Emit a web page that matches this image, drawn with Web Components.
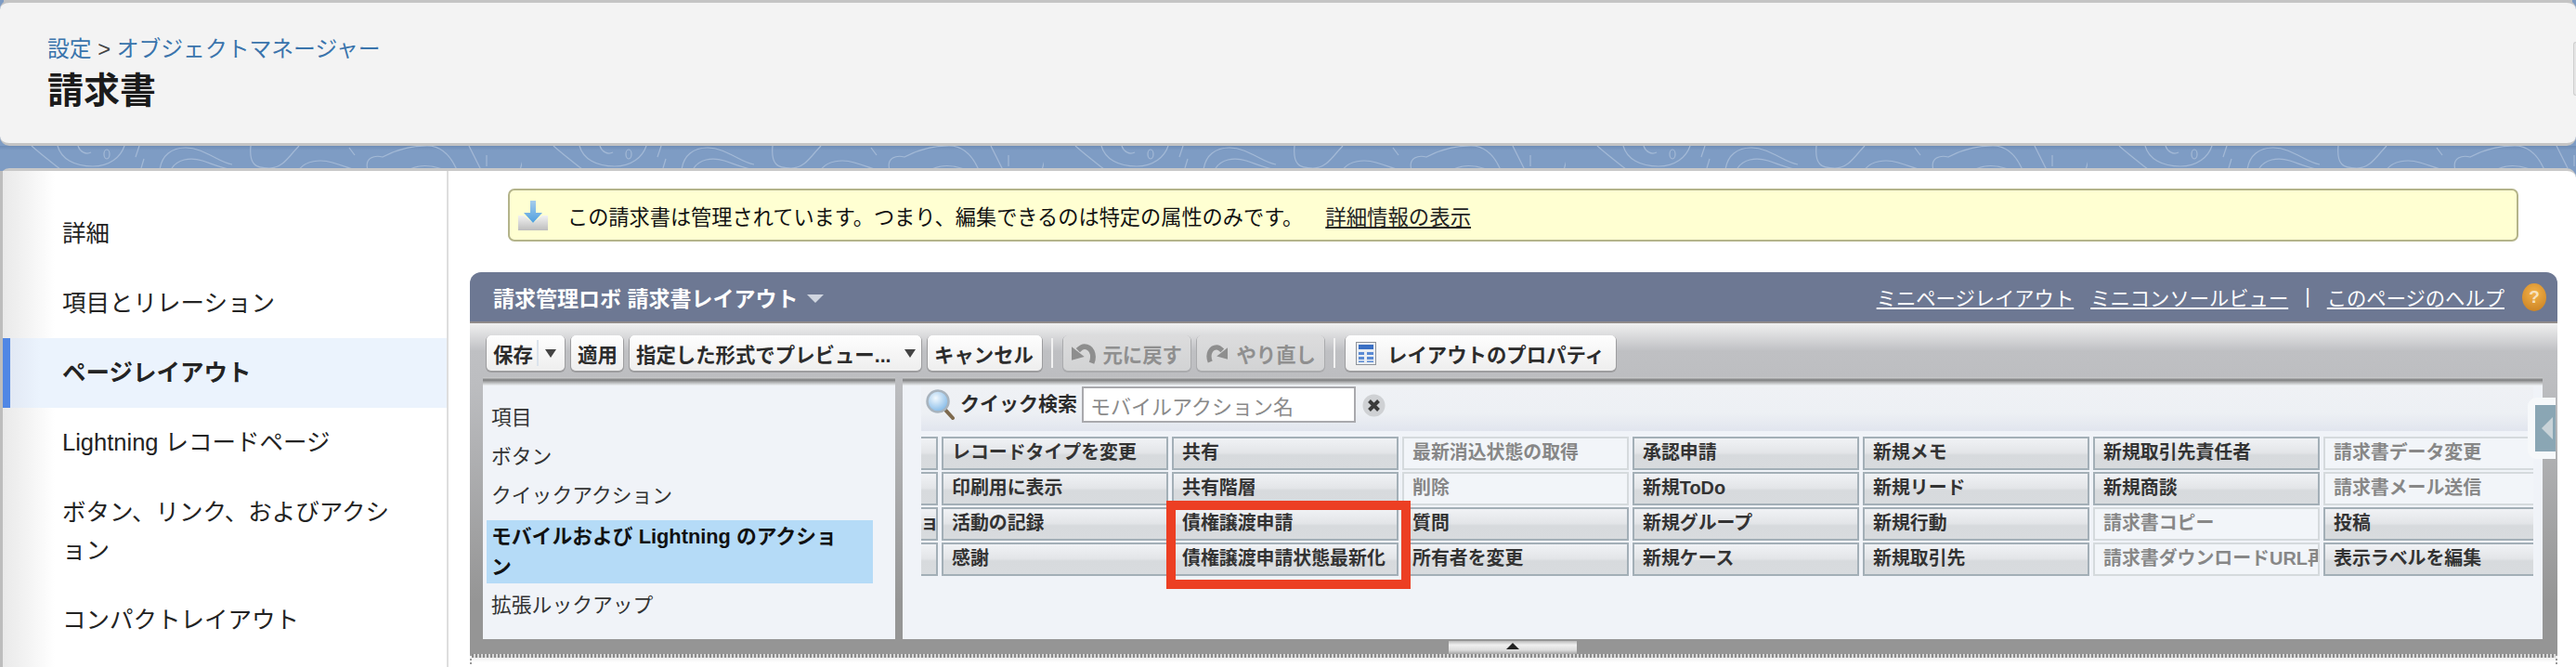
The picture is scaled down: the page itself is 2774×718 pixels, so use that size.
<!DOCTYPE html>
<html lang="ja">
<head>
<meta charset="utf-8">
<title>請求書</title>
<style>
  html, body {
    margin: 0;
    height: 718px;
    overflow: hidden;
    background: #7e9cc4;
    font-family: "Liberation Sans", "Noto Sans CJK JP", sans-serif;
  }
</style>
</head>
<body>
<setup-page>
  <setup-header slot="header">
    <a slot="crumb">設定</a>
    <a slot="crumb-2">オブジェクトマネージャー</a>
    請求書
  </setup-header>
  <setup-nav slot="nav">
    <nav-item>詳細</nav-item>
    <nav-item>項目とリレーション</nav-item>
    <nav-item active>ページレイアウト</nav-item>
    <nav-item>Lightning レコードページ</nav-item>
    <nav-item>ボタン、リンク、およびアクション</nav-item>
    <nav-item>コンパクトレイアウト</nav-item>
  </setup-nav>
  <managed-notice slot="main">この請求書は管理されています。つまり、編集できるのは特定の属性のみです。</managed-notice>
  <layout-panel slot="main">
    <tool-button slot="tools" split style="width:84px">保存</tool-button>
    <tool-button slot="tools" style="width:56px">適用</tool-button>
    <tool-button slot="tools" caret style="width:314px">指定した形式でプレビュー...</tool-button>
    <tool-button slot="tools" style="width:123px">キャンセル</tool-button>
    <tool-sep slot="tools"></tool-sep>
    <tool-button slot="tools" disabled icon="undo" style="width:137px">元に戻す</tool-button>
    <tool-button slot="tools" disabled icon="redo" style="width:137px">やり直し</tool-button>
    <tool-sep slot="tools"></tool-sep>
    <tool-button slot="tools" icon="props" style="width:291px">レイアウトのプロパティ</tool-button>

    <palette-item slot="palette">項目</palette-item>
    <palette-item slot="palette">ボタン</palette-item>
    <palette-item slot="palette">クイックアクション</palette-item>
    <palette-item slot="palette" active>モバイルおよび Lightning のアクション</palette-item>
    <palette-item slot="palette">拡張ルックアップ</palette-item>

    <quick-find slot="fields"></quick-find>
    <field-grid slot="fields"></field-grid>
  </layout-panel>
</setup-page>

<script>
/* Outer frame: header card, the blue topo strip, then the sidebar + main card */
class SetupPage extends HTMLElement {
  constructor() {
    super()
    this.attachShadow({ mode: 'open' })
    this.shadowRoot.innerHTML = `
      <style>
        :host { display: block; position: relative; height: 718px; overflow: hidden; }
        .top { height: 3px; margin: 0 4px; background: #c4c4c4; }
        .band { display: block; width: 100%; height: 24px; }
        .card {
          display: flex;
          height: 534px;
          background: #fff;
          border-top: 3px solid #c8c8c8;
          border-radius: 10px 10px 0 0;
        }
        .main { flex: 1; min-width: 0; }
        .grip {
          position: absolute; right: 0; top: 45px;
          width: 2px; height: 56px;
          border: 1px solid #cfcfcf; border-right: 0;
          border-radius: 4px 0 0 4px;
          background: #e6e6e6;
        }
      </style>
      <div class="top"></div>
      <slot name="header"></slot>
      <svg class="band" aria-hidden="true">
        <defs>
          <linearGradient id="shade" x1="0" y1="0" x2="0" y2="1">
            <stop offset="0" stop-color="#6d8cb6"/>
            <stop offset="0.2" stop-color="#7e9cc4"/>
          </linearGradient>
          <pattern id="topo" width="562" height="24" patternUnits="userSpaceOnUse">
            <g fill="none" stroke="#a3b9d6" stroke-width="1.2">
              <path d="M34 0C44 9 56 18 66 26"/>
              <path d="M62 0C66 14 80 22 100 22C118 22 130 12 134 0"/>
              <path d="M84 0C86 6 92 10 98 7"/>
              <ellipse cx="115" cy="9" rx="3" ry="5"/>
              <path d="M146 12L150 0M152 24L155 14"/>
              <path d="M172 26C174 10 185 2 200 2C220 2 235 18 250 20"/>
              <path d="M184 26C190 14 205 12 218 16C230 20 240 24 250 26"/>
              <path d="M270 0C268 20 275 24 290 24C305 24 312 10 322 0"/>
              <path d="M322 26C328 16 345 14 358 18C372 22 380 26 385 26"/>
              <path d="M376 2L382 10"/>
              <path d="M396 26C392 12 404 10 412 12C425 5 440 0 460 0C475 0 485 10 492 26"/>
              <path d="M440 26C450 20 465 20 478 26"/>
              <path d="M505 0L518 26"/>
              <path d="M524 10V22"/>
              <path d="M560 26C563 15 566 6 570 0"/>
            </g>
          </pattern>
        </defs>
        <rect width="100%" height="100%" fill="url(#shade)"/>
        <rect width="100%" height="100%" fill="url(#topo)"/>
      </svg>
      <div class="card">
        <slot name="nav"></slot>
        <div class="main"><slot name="main"></slot></div>
      </div>
      <div class="grip"></div>`
  }
}

class SetupHeader extends HTMLElement {
  constructor() {
    super()
    this.attachShadow({ mode: 'open' })
    this.shadowRoot.innerHTML = `
      <style>
        :host {
          display: block;
          box-sizing: border-box;
          height: 157px;
          padding: 35px 51px 0;
          background: #f3f3f3;
          border-bottom: 3px solid #c4c4c4;
          border-radius: 10px;
          margin-top: -3px;
          border-top: 3px solid #c4c4c4;
        }
        .crumbs { font-size: 23.8px; line-height: 30px; color: #444; white-space: nowrap; }
        ::slotted(a) { color: #3a74ac; }
        h1 { margin: 5px 0 0; font-size: 39px; line-height: 50px; font-weight: 700; color: #1b1b1b; }
      </style>
      <div class="crumbs"><slot name="crumb"></slot> &gt; <slot name="crumb-2"></slot></div>
      <h1><slot></slot></h1>`
  }
}

class SetupNav extends HTMLElement {
  constructor() {
    super()
    this.attachShadow({ mode: 'open' })
    this.shadowRoot.innerHTML = `
      <style>
        :host {
          display: block;
          box-sizing: border-box;
          flex: none;
          width: 483px;
          padding: 30px 0 0 3px;
          border-left: 3px solid #bdbdbd;
          border-right: 2px solid #dedede;
          background: linear-gradient(90deg, #e9e9e9 0, #fff 56px);
        }
      </style>
      <slot></slot>`
  }
}

class NavItem extends HTMLElement {
  constructor() {
    super()
    this.attachShadow({ mode: 'open' })
    this.shadowRoot.innerHTML = `
      <style>
        :host {
          display: block;
          padding: 17px 44px 17px 64px;
          margin-left: -3px;
          font-size: 25.5px;
          line-height: 41px;
          line-break: loose;
          color: #232323;
        }
        :host([active]) {
          font-weight: 700;
          background: #ebf3fd;
          box-shadow: inset 8px 0 0 #5087e5;
          background-image: linear-gradient(90deg, #dfe6f2 0, #ebf3fd 40px);
        }
      </style>
      <slot></slot>`
  }
}

class ManagedNotice extends HTMLElement {
  constructor() {
    super()
    this.attachShadow({ mode: 'open' })
    this.shadowRoot.innerHTML = `
      <style>
        :host {
          display: flex;
          align-items: center;
          box-sizing: border-box;
          height: 57px;
          margin: 19px 62px 0 64px;
          padding-left: 9px;
          background: #ffffd2;
          border: 2px solid #b4b48a;
          border-radius: 7px;
          font-size: 22.2px;
          color: #111;
          white-space: nowrap;
        }
        svg { flex: none; margin-right: 21px; }
        a { margin-left: 24px; font-size: 22.4px; text-decoration: underline; color: #222; }
      </style>
      <svg width="32" height="34" viewBox="0 0 32 34">
        <defs>
          <linearGradient id="tray" x1="0" y1="0" x2="0" y2="1">
            <stop offset="0" stop-color="#f2f2f2"/>
            <stop offset="1" stop-color="#bdbdbd"/>
          </linearGradient>
          <linearGradient id="arrow" x1="0" y1="0" x2="0" y2="1">
            <stop offset="0" stop-color="#a6cdec"/>
            <stop offset="1" stop-color="#4f9fe0"/>
          </linearGradient>
        </defs>
        <path d="M0 17H6L16 25L26 17H32V33H0Z" fill="url(#tray)"/>
        <path d="M13 1H19V14H26L16 25L6 14H13Z" fill="url(#arrow)"/>
      </svg>
      <span><slot></slot></span>
      <a>詳細情報の表示</a>`
  }
}

class LayoutPanel extends HTMLElement {
  constructor() {
    super()
    this.attachShadow({ mode: 'open' })
    this.shadowRoot.innerHTML = `
      <style>
        :host { display: block; margin: 33px 20px 0 23px; }
        .head {
          display: flex;
          align-items: center;
          justify-content: space-between;
          height: 53px;
          padding: 0 12px 0 25px;
          background: #6d7893;
          border-radius: 12px 12px 0 0;
          color: #fff;
        }
        .title { display: flex; align-items: center; font-size: 23px; font-weight: 700; white-space: nowrap; }
        .title i {
          width: 0; height: 0; margin: 4px 0 0 10px;
          border: 9px solid transparent; border-bottom: 0; border-top: 9px solid #d0d5e0;
        }
        .links { display: flex; align-items: center; font-size: 21.3px; white-space: nowrap; }
        .links a { text-decoration: underline; }
        .links a + a { margin-left: 18px; }
        .links span { margin: 0 18px 0 18px; }
        .help {
          width: 26px; height: 30px; margin-left: 19px;
          display: flex; align-items: center; justify-content: center;
          border-radius: 50%;
          background: radial-gradient(circle at 50% 35%, #f3b24a, #c67c1d);
          color: #f7e2bf; font: 700 19px "Liberation Sans", sans-serif;
        }
        .shell {
          position: relative;
          padding: 13px 16px 0 14px;
          border-top: 2px solid #8f8a8a;
          background: linear-gradient(#f0f0f0 0, #bfc0c3 30px, #bcbdc0 66px, #959595 300px);
        }
        .tools { display: flex; align-items: center; gap: 7px; height: 38px; padding-left: 4px; }
        .cols { display: flex; gap: 8px; height: 282px; margin-top: 7px; }
        .cols > div {
          background: linear-gradient(#d4d5d6 0, #7c7d7e 3px, #a8a9aa 5px, #eef1f4 9px) top / 100% 9px no-repeat, #f0f3f8;
        }
        .left { flex: none; width: 444px; box-sizing: border-box; padding: 23px 24px 0 4px; }
        .right { flex: 1; min-width: 0; padding: 10px 10px 0 20px; }
        .foot { display: flex; justify-content: center; height: 16px; }
        .handle {
          position: relative;
          width: 138px; height: 14px; margin-top: 2px;
          background: linear-gradient(#bbb, #f0f0f0 30%, #ddd 70%, #a5a5a5);
        }
        .handle::after {
          content: "";
          position: absolute; left: 62px; top: 2px;
          border: 7px solid transparent; border-top: 0; border-bottom: 7px solid #222;
        }
        .tail {
          height: 11px;
          background: repeating-linear-gradient(90deg, #8a8a8a 0 2px, #d8d8d8 2px 4px) top / 100% 4px no-repeat,
                      linear-gradient(#f0f0f0 4px, #fff 9px);
          border-left: 2px dotted #999;
          border-right: 2px dotted #999;
        }
        .flyout {
          position: absolute;
          right: 2px; top: 80px;
          box-sizing: border-box;
          width: 30px; height: 66px;
          padding: 8px 0 8px 8px;
          background: #f6f8fa;
          border-radius: 9px 0 0 9px;
        }
        .flyout div {
          display: flex; align-items: center;
          height: 100%;
          background: #8aa6b4;
        }
        .flyout i {
          width: 0; height: 0; margin-left: 7px;
          border: 12px solid transparent; border-left: 0; border-right: 12px solid #c9d3d8;
        }
      </style>
      <div class="head">
        <div class="title">請求管理ロボ 請求書レイアウト<i></i></div>
        <div class="links">
          <a>ミニページレイアウト</a><a>ミニコンソールビュー</a><span>|</span><a>このページのヘルプ</a>
          <div class="help">?</div>
        </div>
      </div>
      <div class="shell">
        <div class="tools"><slot name="tools"></slot></div>
        <div class="cols">
          <div class="left"><slot name="palette"></slot></div>
          <div class="right"><slot name="fields"></slot></div>
        </div>
        <div class="foot"><div class="handle"></div></div>
        <div class="flyout"><div><i></i></div></div>
      </div>
      <div class="tail"></div>`
  }
}

/* Icons for the toolbar, keyed by the button's icon attribute */
var TOOL_ICONS = {
  undo: `<svg width="28" height="24" viewBox="0 0 28 24"><path d="M22 23C26 13 21 5 14 5C11 5 9 7 7 9" fill="none" stroke="#8e8e8e" stroke-width="6"/><path d="M0 5L14 16L0 20Z" fill="#8e8e8e"/></svg>`,
  redo: `<svg width="28" height="24" viewBox="0 0 28 24"><path d="M6 23C2 13 7 5 14 5C17 5 19 7 21 9" fill="none" stroke="#8e8e8e" stroke-width="6"/><path d="M28 5L14 16L28 20Z" fill="#8e8e8e"/></svg>`,
  props: `<svg width="22" height="25" viewBox="0 0 22 25"><rect x="0.5" y="0.5" width="21" height="24" fill="#e9edf2" stroke="#8f9399"/><rect x="3" y="3" width="16" height="5" fill="#3a6fc4"/><path d="M3 11H9V14H3ZM12 11H19V14H12ZM3 16H9V19H3ZM12 16H19V19H12ZM3 20.500H9V22H3ZM12 20.500H19V22H12Z" fill="#5a8ad4"/></svg>`
}

class ToolButton extends HTMLElement {
  constructor() {
    super()
    this.attachShadow({ mode: 'open' })
  }

  connectedCallback() {
    var icon = TOOL_ICONS[this.getAttribute('icon')] || ''
    var tail = ''
    if (this.hasAttribute('split')) tail = '<b class="bar"></b><i></i>'
    if (this.hasAttribute('caret')) tail = '<i class="tight"></i>'

    this.shadowRoot.innerHTML = `
      <style>
        :host {
          display: flex;
          align-items: center;
          flex: none;
          box-sizing: border-box;
          height: 38px;
          padding: 0 7px;
          background: linear-gradient(#fefefe, #eeeeee);
          border-radius: 5px;
          box-shadow: 0 1px 0 1px #9d9d9f;
          font-size: 21.4px;
          font-weight: 700;
          color: #2c2c2c;
          white-space: nowrap;
        }
        :host([disabled]) {
          background: linear-gradient(#dcdcdd, #d2d3d4);
          box-shadow: 0 1px 0 1px #aaabad;
          color: #8f8f8f;
        }
        :host([icon]) { padding: 0 9px; }
        :host([icon="props"]) { padding: 0 9px 0 11px; }
        svg { margin-right: 6px; }
        :host([icon="props"]) svg { margin-right: 12px; }
        :host([icon="redo"]) svg { margin-right: 9px; }
        .bar { width: 2px; height: 28px; margin: 0 7px 0 4px; background: #dbe3ec; }
        i {
          width: 0; height: 0;
          border: 6px solid transparent; border-bottom: 0; border-top: 9px solid #444;
          margin-right: -1px;
        }
        .tight { margin-left: auto; }
      </style>
      ${icon}<slot></slot>${tail}`
  }
}

class ToolSep extends HTMLElement {
  constructor() {
    super()
    this.attachShadow({ mode: 'open' })
    this.shadowRoot.innerHTML = `
      <style>
        :host { display: block; width: 2px; height: 32px; margin: 0 4px 0 3px; background: #f1f1f1; }
      </style>`
  }
}

class PaletteItem extends HTMLElement {
  constructor() {
    super()
    this.attachShadow({ mode: 'open' })
    this.shadowRoot.innerHTML = `
      <style>
        :host {
          display: block;
          padding: 0 5px;
          font-size: 21.8px;
          line-height: 42px;
          color: #333;
        }
        :host([active]) {
          margin: 5px 0 3px;
          padding: 1px 28px 1px 5px;
          font-weight: 700;
          line-height: 33px;
          background: #b5dbf7;
          color: #111;
        }
      </style>
      <slot></slot>`
  }
}

class QuickFind extends HTMLElement {
  constructor() {
    super()
    this.attachShadow({ mode: 'open' })
    this.shadowRoot.innerHTML = `
      <style>
        :host {
          display: flex;
          align-items: flex-start;
          box-sizing: border-box;
          height: 48px;
          padding-left: 4px;
          background: linear-gradient(#eff1f5 0, #edf0f4 60%, #e1e5ee);
        }
        svg { flex: none; margin-top: 3px; }
        b { margin: 0 5px 0 5px; font-size: 21px; line-height: 37px; color: #2b2b2b; white-space: nowrap; }
        input {
          box-sizing: border-box;
          width: 295px; height: 39px;
          padding: 0 7px;
          border: 2px solid #a9a9ad;
          border-radius: 0;
          background: #fff;
          font: 22px "Noto Sans CJK JP", sans-serif;
          outline: none;
        }
        input::placeholder { color: #8a8a8a; opacity: 1; }
        .clear { margin: 8px 0 0 7px; }
      </style>
      <svg width="33" height="33" viewBox="0 0 33 33">
        <defs>
          <radialGradient id="lens" cx="0.4" cy="0.35" r="0.7">
            <stop offset="0" stop-color="#f2f9fe"/>
            <stop offset="1" stop-color="#7db6e6"/>
          </radialGradient>
        </defs>
        <path d="M21 21L30 31" stroke="#7e6a4e" stroke-width="4" stroke-linecap="round"/>
        <circle cx="14" cy="13" r="11.500" fill="url(#lens)" stroke="#a8b3bd" stroke-width="2.500"/>
      </svg>
      <b>クイック検索</b>
      <input placeholder="モバイルアクション名">
      <svg class="clear" width="25" height="25" viewBox="0 0 25 25">
        <circle cx="12.500" cy="12.500" r="12" fill="#cfd1d4"/>
        <path d="M7.500 7.500L17.500 17.500M17.500 7.500L7.500 17.500" stroke="#3a3a3a" stroke-width="4"/>
      </svg>`
  }
}

/* Columns of the palette, top to bottom. A leading ~ marks a disabled field */
var FIELD_COLUMNS = [
  ['', '', 'ョ', ''],
  ['レコードタイプを変更', '印刷用に表示', '活動の記録', '感謝'],
  ['共有', '共有階層', '債権譲渡申請', '債権譲渡申請状態最新化'],
  ['~最新消込状態の取得', '~削除', '質問', '所有者を変更'],
  ['承認申請', '新規ToDo', '新規グループ', '新規ケース'],
  ['新規メモ', '新規リード', '新規行動', '新規取引先'],
  ['新規取引先責任者', '新規商談', '~請求書コピー', '~請求書ダウンロードURL再発行'],
  ['~請求書データ変更', '~請求書メール送信', '投稿', '表示ラベルを編集']
]

class FieldGrid extends HTMLElement {
  constructor() {
    super()
    this.attachShadow({ mode: 'open' })
    var cells = FIELD_COLUMNS.map((column, index) => column.map((name) => {
      var off = name.startsWith('~')
      var cls = (off ? 'off' : '') + (index == 0 ? ' cut' : '')
      return `<div class="${cls}">${off ? name.slice(1) : name}</div>`
    }).join('')).join('')

    this.shadowRoot.innerHTML = `
      <style>
        :host { display: block; position: relative; margin-top: 6px; }
        .clip { overflow: hidden; }
        .grid {
          display: grid;
          grid-auto-flow: column;
          grid-template-rows: repeat(4, 36px);
          grid-auto-columns: 244px;
          gap: 2px 4px;
          margin-left: -226px;
        }
        .grid div {
          box-sizing: border-box;
          padding: 0 9px;
          overflow: hidden;
          border: 2px solid #a3afb7;
          background: linear-gradient(#f0f2f5 0, #e3e5e8 48%, #d7dadd 56%, #d8dbde);
          font-size: 19.9px;
          font-weight: 700;
          line-height: 31px;
          color: #333;
          white-space: nowrap;
        }
        .grid div.off { border-color: #d5dadd; background: #f2f5f9; color: #878787; }
        .grid div.cut { padding: 0 0 0 223px; }
        .mark {
          position: absolute;
          left: 264px; top: 69px;
          box-sizing: border-box;
          width: 263px; height: 95px;
          border: 10px solid #ec3f23;
        }
      </style>
      <div class="clip"><div class="grid">${cells}</div></div>
      <div class="mark"></div>`
  }
}

window.customElements.define('setup-page', SetupPage)
window.customElements.define('setup-header', SetupHeader)
window.customElements.define('setup-nav', SetupNav)
window.customElements.define('nav-item', NavItem)
window.customElements.define('managed-notice', ManagedNotice)
window.customElements.define('layout-panel', LayoutPanel)
window.customElements.define('tool-button', ToolButton)
window.customElements.define('tool-sep', ToolSep)
window.customElements.define('palette-item', PaletteItem)
window.customElements.define('quick-find', QuickFind)
window.customElements.define('field-grid', FieldGrid)
</script>
</body>
</html>
